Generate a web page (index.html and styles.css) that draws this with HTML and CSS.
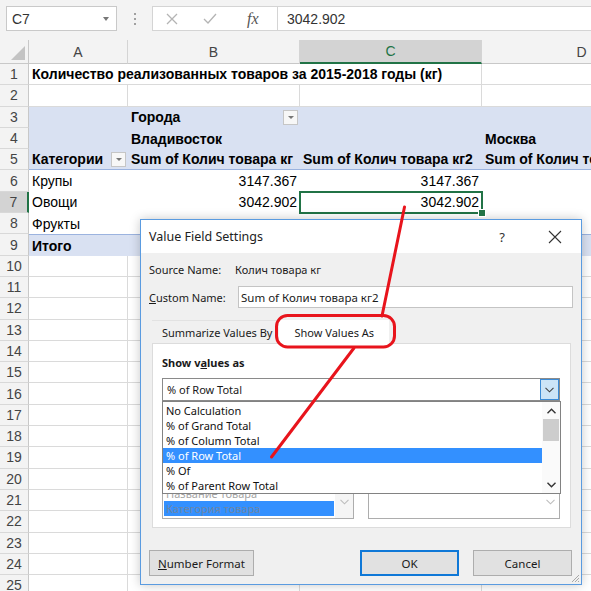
FILE: index.html
```html
<!DOCTYPE html>
<html lang="ru">
<head>
<meta charset="utf-8">
<title>Value Field Settings</title>
<link rel="stylesheet" href="styles.css">
</head>
<body>
<div class="fbar">
  <div class="namebox"><span>C7</span><span class="nb-arrow"></span></div>
  <div class="dots"><i></i><i></i><i></i></div>
  <div class="fxgroup">
    <span class="fxb w38"><svg width="12" height="12" viewBox="0 0 12 12"><path d="M1 1L11 11M11 1L1 11" stroke="#b4b4b4" stroke-width="1.3" fill="none"/></svg></span>
    <span class="fxb w38"><svg width="14" height="11" viewBox="0 0 14 11"><path d="M1 6L5 10L13 1" stroke="#b4b4b4" stroke-width="1.3" fill="none"/></svg></span>
    <span class="fxb w49 fx">fx</span>
  </div>
  <div class="fvalue">3042.902</div>
</div>

<div class="sheet">
  <div class="corner"><span class="tri"></span></div>
  <div class="ch">A</div><div class="ch">B</div><div class="ch act">C</div><div class="ch">D</div>

  <div class="rh">1</div><div class="c bold title">Количество реализованных товаров за 2015-2018 годы (кг)</div><div class="c"></div>
  <div class="rh">2</div><div class="c"></div><div class="c"></div><div class="c"></div><div class="c"></div>

  <div class="rh">3</div><div class="p blue"></div><div class="p blue bold split">Города<span class="fbtn"></span></div><div class="p blue"></div><div class="p blue"></div>
  <div class="rh">4</div><div class="p blue"></div><div class="p blue bold">Владивосток</div><div class="p blue"></div><div class="p blue bold">Москва</div>
  <div class="rh">5</div><div class="p blue bold bb split">Категории<span class="fbtn"></span></div><div class="p blue bold bb">Sum of Колич товара кг</div><div class="p blue bold bb">Sum of Колич товара кг2</div><div class="p blue bold bb">Sum of Колич товара кг</div>
  <div class="rh">6</div><div class="p">Крупы</div><div class="p num">3147.367</div><div class="p num">3147.367</div><div class="p"></div>
  <div class="rh act">7</div><div class="p">Овощи</div><div class="p num">3042.902</div><div class="p num selcell">3042.902</div><div class="p"></div>
  <div class="rh">8</div><div class="p">Фрукты</div><div class="p"></div><div class="p"></div><div class="p"></div>
  <div class="rh">9</div><div class="p blue bold bt">Итого</div><div class="p blue bt"></div><div class="p blue bt"></div><div class="p blue bt"></div>

  <div class="rh">10</div><div class="c"></div><div class="c"></div><div class="c"></div><div class="c"></div>
  <div class="rh">11</div><div class="c"></div><div class="c"></div><div class="c"></div><div class="c"></div>
  <div class="rh">12</div><div class="c"></div><div class="c"></div><div class="c"></div><div class="c"></div>
  <div class="rh">13</div><div class="c"></div><div class="c"></div><div class="c"></div><div class="c"></div>
  <div class="rh">14</div><div class="c"></div><div class="c"></div><div class="c"></div><div class="c"></div>
  <div class="rh">15</div><div class="c"></div><div class="c"></div><div class="c"></div><div class="c"></div>
  <div class="rh">16</div><div class="c"></div><div class="c"></div><div class="c"></div><div class="c"></div>
  <div class="rh">17</div><div class="c"></div><div class="c"></div><div class="c"></div><div class="c"></div>
  <div class="rh">18</div><div class="c"></div><div class="c"></div><div class="c"></div><div class="c"></div>
  <div class="rh">19</div><div class="c"></div><div class="c"></div><div class="c"></div><div class="c"></div>
  <div class="rh">20</div><div class="c"></div><div class="c"></div><div class="c"></div><div class="c"></div>
  <div class="rh">21</div><div class="c"></div><div class="c"></div><div class="c"></div><div class="c"></div>
  <div class="rh">22</div><div class="c"></div><div class="c"></div><div class="c"></div><div class="c"></div>
  <div class="rh">23</div><div class="c"></div><div class="c"></div><div class="c"></div><div class="c"></div>
  <div class="rh">24</div><div class="c"></div><div class="c"></div><div class="c"></div><div class="c"></div>
  <div class="rh">25</div><div class="c"></div><div class="c"></div><div class="c"></div><div class="c"></div>
</div>

<div class="dialog">
  <div class="dtitle">
    <span class="dt-text">Value Field Settings</span>
    <span class="tbtn">?</span>
    <span class="tbtn"><svg width="14" height="14" viewBox="0 0 14 14"><path d="M1 1L13 13M13 1L1 13" stroke="#333" stroke-width="1.1" fill="none"/></svg></span>
  </div>
  <div class="drow src"><span class="lbl1">Source Name:</span><span>Колич товара кг</span></div>
  <div class="drow cust"><span class="lbl2"><u>C</u>ustom Name:</span><div class="inp">Sum of Колич товара кг2</div></div>
  <div class="tabs">
    <span class="tab">Summarize Values By</span>
    <span class="tab on">Show Values As</span>
  </div>
  <div class="panel">
    <div class="ptitle">Show v<u>a</u>lues as</div>
    <div class="combo">
      <span class="ctext">% of Row Total</span>
      <span class="cbtn"><svg width="9" height="6" viewBox="0 0 9 6"><path d="M0.5 0.8L4.5 4.8L8.5 0.8" stroke="#444" stroke-width="1.1" fill="none"/></svg></span>
    </div>
    <div class="lower">
      <div class="lbox">
        <div class="litem dis">Название товара</div>
        <div class="litem dis sel">Категория товара</div>
        <span class="lchev"><svg width="9" height="6" viewBox="0 0 9 6"><path d="M0.5 0.8L4.5 4.8L8.5 0.8" stroke="#bdbdbd" stroke-width="1.1" fill="none"/></svg></span>
      </div>
      <div class="rbox">
        <span class="lchev"><svg width="9" height="6" viewBox="0 0 9 6"><path d="M0.5 0.8L4.5 4.8L8.5 0.8" stroke="#bdbdbd" stroke-width="1.1" fill="none"/></svg></span>
      </div>
    </div>
    <div class="dlist">
      <div class="items">
        <div class="it">No Calculation</div>
        <div class="it">% of Grand Total</div>
        <div class="it">% of Column Total</div>
        <div class="it on">% of Row Total</div>
        <div class="it">% Of</div>
        <div class="it">% of Parent Row Total</div>
      </div>
      <div class="sbar">
        <span class="sarr"><svg width="9" height="6" viewBox="0 0 9 6"><path d="M0.5 5.2L4.5 1.2L8.5 5.2" stroke="#333" stroke-width="1.4" fill="none"/></svg></span>
        <span class="thumb"></span>
        <span class="sfill"></span>
        <span class="sarr"><svg width="9" height="6" viewBox="0 0 9 6"><path d="M0.5 0.8L4.5 4.8L8.5 0.8" stroke="#333" stroke-width="1.4" fill="none"/></svg></span>
      </div>
    </div>
  </div>
  <div class="btns">
    <span class="btn nf"><u>N</u>umber Format</span>
    <span class="spacer"></span>
    <span class="btn ok">OK</span>
    <span class="btn">Cancel</span>
  </div>
  <svg class="grip" width="10" height="10" viewBox="0 0 10 10"><path d="M9 2L2 9M9 5L5 9M9 8L8 9" stroke="#a8a8a8" stroke-width="1" fill="none"/></svg>
</div>

<svg class="annot" width="591" height="591" viewBox="0 0 591 591">
  <path d="M404.5 207L382 316" stroke="#e8141c" stroke-width="3" fill="none" stroke-linecap="round"/>
  <rect x="276.5" y="315.5" width="118" height="31.5" rx="11" stroke="#e8141c" stroke-width="3" fill="none"/>
  <path d="M354 348L271.5 457" stroke="#e8141c" stroke-width="3" fill="none" stroke-linecap="round"/>
</svg>
</body>
</html>
```

FILE: styles.css
```css
* { box-sizing: border-box; }
html, body { margin: 0; padding: 0; }
body {
  width: 591px;
  height: 591px;
  overflow: hidden;
  position: relative;
  background: #ffffff;
  font-family: "Liberation Sans", Arial, sans-serif;
  color: #000;
}

/* formula bar */
.fbar {
  height: 40px;
  background: #f3f3f3;
  display: flex;
  align-items: flex-start;
  padding-top: 6px;
}
.namebox {
  margin-left: 6px;
  width: 111px;
  height: 25px;
  background: #fff;
  border: 1px solid #c9c9c9;
  display: flex;
  align-items: center;
  justify-content: space-between;
  padding: 0 7px 0 5px;
  font-size: 14px;
  color: #333;
}
.nb-arrow {
  width: 0; height: 0;
  border-left: 3.5px solid transparent;
  border-right: 3.5px solid transparent;
  border-top: 4px solid #777;
}
.dots {
  width: 35px;
  height: 25px;
  display: flex;
  flex-direction: column;
  align-items: center;
  justify-content: center;
  gap: 3px;
}
.dots i { display: block; width: 2px; height: 2px; background: #a0a0a0; }
.fxgroup {
  width: 125px;
  height: 25px;
  background: #fff;
  border: 1px solid #d4d4d4;
  border-right: none;
  display: flex;
  align-items: center;
}
.fxb { display: flex; align-items: center; justify-content: center; height: 100%; }
.w38 { width: 38px; }
.w49 { width: 49px; }
.fx {
  font-family: "Liberation Serif", serif;
  font-style: italic;
  font-size: 16px;
  color: #555;
}
.fvalue {
  flex: 1;
  height: 25px;
  background: #fff;
  border: 1px solid #d4d4d4;
  border-right: none;
  display: flex;
  align-items: center;
  padding-left: 9px;
  font-size: 14px;
  color: #333;
}

/* sheet */
.sheet {
  display: grid;
  grid-template-columns: 29px 99px 172px 182px 200px;
  grid-template-rows: 24px repeat(25, 21.3px);
  width: 682px;
}
.corner {
  background: #f3f3f3;
  border-right: 1px solid #c8c8c8;
  border-bottom: 1px solid #c8c8c8;
  position: relative;
}
.tri {
  position: absolute;
  right: 3px; bottom: 3px;
  width: 0; height: 0;
  border-left: 14px solid transparent;
  border-bottom: 14px solid #c3c3c3;
}
.ch {
  background: #f3f3f3;
  border-right: 1px solid #d4d4d4;
  border-bottom: 1px solid #c8c8c8;
  display: flex;
  align-items: center;
  justify-content: center;
  font-size: 14px;
  color: #444;
}
.ch.act {
  background: #d3d3d3;
  color: #217346;
  border-bottom: 2px solid #217346;
}
.rh {
  background: #f3f3f3;
  border-right: 1px solid #c8c8c8;
  border-bottom: 1px solid #d8d8d8;
  display: flex;
  align-items: center;
  justify-content: center;
  font-size: 14px;
  color: #444;
}
.rh.act {
  background: #d3d3d3;
  border-right: 2px solid #217346;
}
.c, .p {
  font-size: 14px;
  padding: 0 3px;
  display: flex;
  align-items: center;
  white-space: nowrap;
  overflow: hidden;
}
.c {
  border-right: 1px solid #dadada;
  border-bottom: 1px solid #dadada;
}
.title { grid-column: span 3; overflow: visible; }
.blue { background: #d9e1f2; }
.bold { font-weight: bold; }
.num { justify-content: flex-end; }
.bb { border-bottom: 1px solid #9bb3df; }
.bt { border-top: 1px solid #9bb3df; }
.split { justify-content: space-between; padding-right: 2px; }
.fbtn {
  width: 15px;
  height: 15px;
  background: #f7f7f7;
  border: 1px solid #c6c6c6;
  position: relative;
}
.fbtn::after {
  content: "";
  position: absolute;
  left: 4px; top: 5px;
  border-left: 3px solid transparent;
  border-right: 3px solid transparent;
  border-top: 3px solid #777;
}
.selcell { position: relative; overflow: visible; }
.selcell::after {
  content: "";
  position: absolute;
  left: -1px; right: -1px; top: -1px; bottom: -1px;
  border: 2px solid #217346;
}
.selcell::before {
  content: "";
  position: absolute;
  right: -4px; bottom: -4px;
  width: 6px; height: 6px;
  background: #217346;
  border: 1px solid #fff;
  z-index: 1;
}

/* dialog */
.dialog {
  position: absolute;
  left: 140px;
  top: 219px;
  width: 442px;
  height: 366px;
  background: #f0f0f0;
  border: 1px solid #5a9be0;
  box-shadow: 0 0 10px rgba(0,0,0,0.22);
  font-family: "Noto Sans", "Open Sans", sans-serif;
  font-size: 11px;
  color: #1a1a1a;
}
.dtitle {
  height: 33px;
  background: #fff;
  display: flex;
  align-items: center;
  padding-left: 8px;
  padding-right: 3px;
}
.dt-text { flex: 1; font-size: 12.5px; color: #222; }
.tbtn {
  width: 46px;
  height: 33px;
  display: flex;
  align-items: center;
  justify-content: center;
  font-size: 13px;
  color: #333;
}
.tbtn + .tbtn { margin-left: 7px; }
.drow { display: flex; align-items: center; padding-left: 8px; }
.src { height: 18px; margin-top: 7px; }
.lbl1 { width: 86px; }
.cust { height: 22px; margin-top: 8px; padding-right: 8px; }
.lbl2 { width: 89px; }
.inp {
  flex: 1;
  height: 22px;
  background: #fff;
  border: 1px solid #c4c4c4;
  display: flex;
  align-items: center;
  padding-left: 2px;
  font-size: 11.5px;
}
.tabs {
  margin-top: 12px;
  margin-left: 11px;
  height: 23px;
  display: flex;
  align-items: stretch;
  position: relative;
  z-index: 2;
}
.tab {
  display: flex;
  align-items: center;
  padding: 0 7px 0 10px;
  border-top: 1px solid #e2e2e2;
  margin-top: 0;
}
.tab.on {
  background: #fff;
  border-top: 1px solid #fff;
  padding: 0 15px;
  height: 24px;
  margin-left: 0;
}
.panel {
  margin: 0 10px 0 11px;
  height: 185px;
  background: #fff;
  border: 1px solid #dcdcdc;
  padding: 9px 10px 8px 9px;
  position: relative;
}
.ptitle { height: 18px; display: flex; align-items: center; font-weight: bold; }
.combo {
  margin-top: 7px;
  height: 23px;
  border: 1px solid #8a8a8a;
  display: flex;
  align-items: center;
  background: #fff;
}
.ctext { flex: 1; padding-left: 4px; }
.cbtn {
  width: 19px;
  height: 21px;
  background: #cce4f7;
  border: 1px solid #3c8bd6;
  display: flex;
  align-items: center;
  justify-content: center;
}
.lower {
  margin-top: 69px;
  height: 49px;
  display: flex;
  gap: 14px;
}
.lbox, .rbox {
  width: 192px;
  border: 1px solid #adadad;
  background: #fff;
  position: relative;
  padding: 15px 19px 1px 1px;
}
.litem { height: 15px; display: flex; align-items: center; padding-left: 2px; }
.litem.dis { color: #a4a4a4; }
.litem.sel { background: #3390ff; color: #6d86a6; }
.lchev {
  position: absolute;
  right: 0; top: 15px; bottom: 0;
  width: 18px;
  display: flex;
  align-items: center;
  justify-content: center;
  background: #f5f5f5;
}
.rbox .lchev { background: #fff; }
.dlist {
  position: absolute;
  left: 9px;
  top: 57px;
  width: 399px;
  height: 93px;
  border: 1px solid #828282;
  background: #fff;
  display: flex;
  z-index: 3;
}
.items { flex: 1; padding-top: 1px; }
.it { height: 15px; display: flex; align-items: center; padding-left: 3px; color: #111; }
.it.on { background: #3390ff; color: #fff; }
.sbar {
  width: 18px;
  display: flex;
  flex-direction: column;
  align-items: center;
  background: #fafafa;
}
.sarr { height: 17px; display: flex; align-items: center; justify-content: center; width: 100%; }
.thumb { width: 16px; height: 22px; background: #cdcdcd; }
.sfill { flex: 1; }
.btns {
  margin-top: 22px;
  height: 26px;
  display: flex;
  padding: 0 9px 0 8px;
  gap: 14px;
}
.spacer { flex: 1; }
.btn {
  width: 99px;
  height: 26px;
  background: #e1e1e1;
  border: 1px solid #adadad;
  display: flex;
  align-items: center;
  justify-content: center;
  font-size: 11.5px;
}
.btn.nf { width: 105px; }
.btn.ok { border: 2px solid #0f78d7; }
.grip { position: absolute; right: 1px; bottom: 1px; }

.annot { position: absolute; left: 0; top: 0; pointer-events: none; z-index: 10; }
```
